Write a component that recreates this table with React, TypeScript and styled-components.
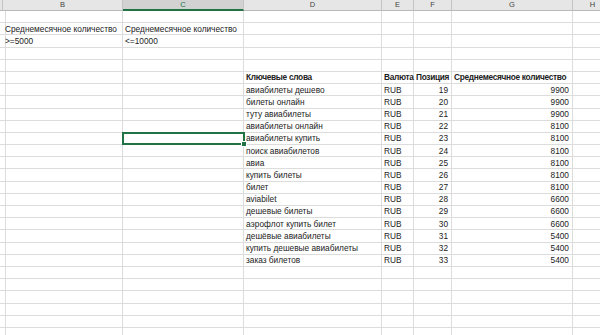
import React from 'react';
import styled, { createGlobalStyle, css } from 'styled-components';

const GlobalStyle = createGlobalStyle`
  html, body {
    margin: 0;
    padding: 0;
    background: #fff;
    overflow: hidden;
  }
`;

const COLS = [3, 120, 121, 138, 32, 38, 121, 40];
const LETTERS = ['', 'B', 'C', 'D', 'E', 'F', 'G', 'H'];
const ROW_COUNT = 27;

const Sheet = styled.div`
  display: grid;
  grid-template-columns: ${COLS.map((w) => `${w}px`).join(' ')};
  grid-template-rows: 11px;
  grid-auto-rows: 12.2px;
  width: 613px;
  font-family: 'Liberation Sans', Arial, sans-serif;
  font-size: 8.3px;
  color: #222;
`;

const HeaderCell = styled.div<{ $active?: boolean }>`
  display: flex;
  align-items: center;
  justify-content: center;
  box-sizing: border-box;
  background: ${(p) => (p.$active ? '#d2d2d2' : '#e6e6e6')};
  color: ${(p) => (p.$active ? '#217346' : '#444')};
  border-right: 1px solid #c4c4c4;
  border-bottom: ${(p) => (p.$active ? '2px solid #217346' : '1px solid #b9b9b9')};
  font-size: 7.5px;
  line-height: 1;
`;

const Cell = styled.div<{ $align?: 'left' | 'right'; $bold?: boolean; $selected?: boolean }>`
  position: relative;
  display: flex;
  align-items: center;
  justify-content: ${(p) => (p.$align === 'right' ? 'flex-end' : 'flex-start')};
  box-sizing: border-box;
  padding: 0 3px 0 2px;
  border-right: 1px solid #dcdcdc;
  border-bottom: 1px solid #dcdcdc;
  white-space: nowrap;
  overflow: visible;
  font-weight: ${(p) => (p.$bold ? 700 : 400)};
  letter-spacing: ${(p) => (p.$bold ? '-0.3px' : '0')};
  line-height: 1;
  ${(p) =>
    p.$selected &&
    css`
      &::after {
        content: '';
        position: absolute;
        left: -1px;
        top: -1px;
        right: -2px;
        bottom: -1px;
        border: 2px solid #217346;
        pointer-events: none;
      }
      &::before {
        content: '';
        position: absolute;
        right: -4px;
        bottom: -3px;
        width: 4px;
        height: 4px;
        background: #217346;
        border: 1px solid #fff;
        z-index: 1;
      }
    `}
`;

type CellData = { text?: string; align?: 'left' | 'right'; bold?: boolean };

const keywords: [string, number, number][] = [
  ['авиабилеты дешево', 19, 9900],
  ['билеты онлайн', 20, 9900],
  ['туту авиабилеты', 21, 9900],
  ['авиабилеты онлайн', 22, 8100],
  ['авиабилеты купить', 23, 8100],
  ['поиск авиабилетов', 24, 8100],
  ['авиа', 25, 8100],
  ['купить билеты', 26, 8100],
  ['билет', 27, 8100],
  ['aviabilet', 28, 6600],
  ['дешевые билеты', 29, 6600],
  ['аэрофлот купить билет', 30, 6600],
  ['дешёвые авиабилеты', 31, 5400],
  ['купить дешевые авиабилеты', 32, 5400],
  ['заказ билетов', 33, 5400],
];

function buildRows(): CellData[][] {
  const rows: CellData[][] = Array.from({ length: ROW_COUNT }, () =>
    COLS.map(() => ({}))
  );
  rows[1][1] = { text: 'Среднемесячное количество' };
  rows[1][2] = { text: 'Среднемесячное количество' };
  rows[2][1] = { text: '>=5000' };
  rows[2][2] = { text: '<=10000' };
  rows[5][3] = { text: 'Ключевые слова', bold: true };
  rows[5][4] = { text: 'Валюта', bold: true };
  rows[5][5] = { text: 'Позиция', bold: true };
  rows[5][6] = { text: 'Среднемесячное количество', bold: true };
  keywords.forEach(([word, pos, count], i) => {
    const r = rows[6 + i];
    r[3] = { text: word };
    r[4] = { text: 'RUB' };
    r[5] = { text: String(pos), align: 'right' };
    r[6] = { text: String(count), align: 'right' };
  });
  return rows;
}

const rows = buildRows();

export default function App() {
  return (
    <>
      <GlobalStyle />
      <Sheet>
        {LETTERS.map((l, i) => (
          <HeaderCell key={`h${i}`} $active={l === 'C'}>
            {l}
          </HeaderCell>
        ))}
        {rows.map((row, r) =>
          row.map((c, ci) => (
            <Cell
              key={`${r}-${ci}`}
              $align={c.align}
              $bold={c.bold}
              $selected={r === 10 && ci === 2}
            >
              {c.text}
            </Cell>
          ))
        )}
      </Sheet>
    </>
  );
}
